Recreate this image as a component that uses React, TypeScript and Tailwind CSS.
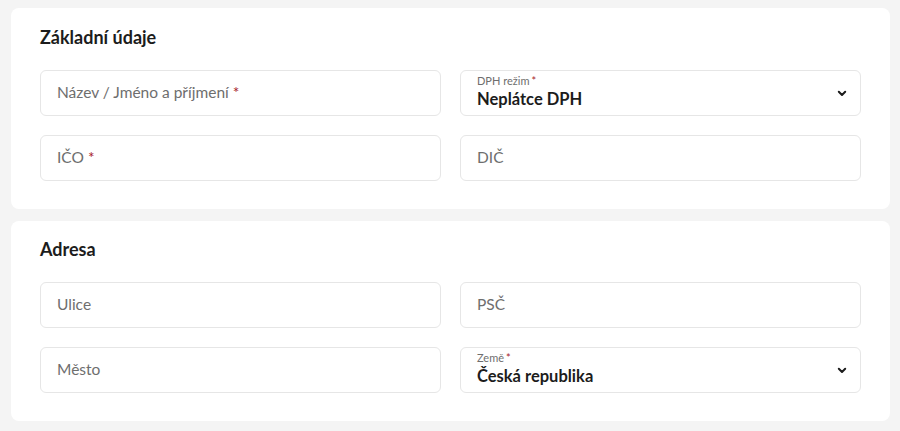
import React from "react";

const font = { fontFamily: '"Lato", "Noto Sans", sans-serif' };

function Req() {
  return <span className="ml-1 text-[#a8232b]">*</span>;
}

function TextField({ label, required }: { label: string; required?: boolean }) {
  return (
    <div className="flex h-[46px] items-center rounded-md border border-[#e6e6e6] bg-white px-4 text-[15.5px] text-[#6e6e6e]">
      {label}
      {required && <Req />}
    </div>
  );
}

function SelectField({ label, value }: { label: string; value: string }) {
  return (
    <div className="flex h-[46px] items-center rounded-md border border-[#e6e6e6] bg-white pl-4 pr-[13px]">
      <div className="-mt-[3px] flex flex-1 flex-col leading-none">
        <span className="text-[11px] text-[#6e6e6e]">
          {label}
          <span className="ml-0.5 text-[#a8232b]">*</span>
        </span>
        <span className="mt-[5px] text-[16.5px] font-bold text-[#1c1c1c]">{value}</span>
      </div>
      <svg width="10" height="7" viewBox="0 0 10 7" fill="none">
        <path d="M1.8 1.8 5 5l3.2-3.2" stroke="#1c1c1c" strokeWidth="2" strokeLinecap="round" strokeLinejoin="round" />
      </svg>
    </div>
  );
}

function Card({ title, top, children }: { title: string; top: string; children: React.ReactNode }) {
  return (
    <section className={`rounded-lg bg-white px-[29px] pb-[28px] ${top}`}>
      <h2 className="mb-[21px] text-[18px] font-bold leading-6 text-[#1c1c1c]">{title}</h2>
      <div className="grid grid-cols-2 gap-[19px]">{children}</div>
    </section>
  );
}

export default function App() {
  return (
    <div style={font} className="min-h-[431px] w-full bg-[#f4f4f4] pb-3 pl-[11px] pr-[10px] pt-2">
      <div className="flex flex-col gap-3">
        <Card title="Základní údaje" top="pt-[17px]">
          <TextField label="Název / Jméno a příjmení" required />
          <SelectField label="DPH režim" value="Neplátce DPH" />
          <TextField label="IČO" required />
          <TextField label="DIČ" />
        </Card>
        <Card title="Adresa" top="pt-[16px]">
          <TextField label="Ulice" />
          <TextField label="PSČ" />
          <TextField label="Město" />
          <SelectField label="Země" value="Česká republika" />
        </Card>
      </div>
    </div>
  );
}
